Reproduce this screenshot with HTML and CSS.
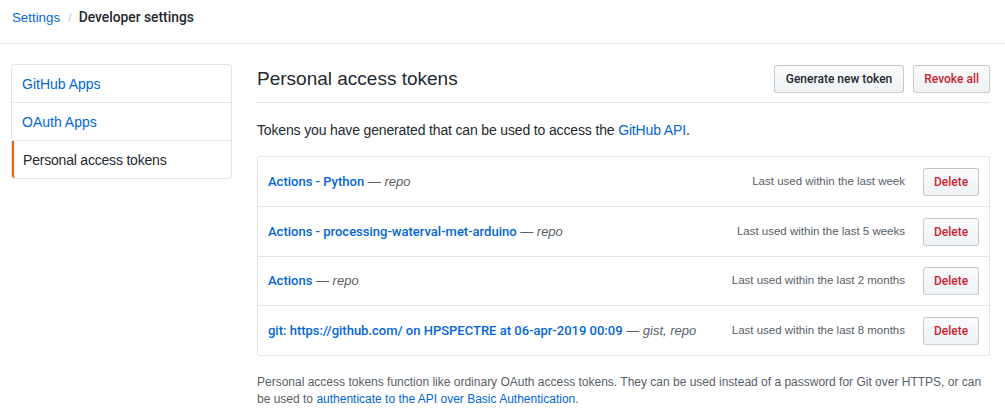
FILE: index.html
```html
<!DOCTYPE html>
<html>
<head>
<meta charset="utf-8">
<link rel="stylesheet" href="styles.css">
</head>
<body>
<div class="pagehead">
  <a class="crumb" href="#">Settings</a><span class="sep">/</span><strong class="current">Developer settings</strong>
</div>
<div class="container">
  <nav class="menu">
    <a class="menu-item" href="#">GitHub Apps</a>
    <a class="menu-item" href="#">OAuth Apps</a>
    <a class="menu-item selected" href="#">Personal access tokens</a>
  </nav>
  <main class="main">
    <div class="subhead">
      <h2 class="subhead-title">Personal access tokens</h2>
      <div class="actions">
        <button class="btn">Generate new token</button>
        <button class="btn danger">Revoke all</button>
      </div>
    </div>
    <p class="intro">Tokens you have generated that can be used to access the <a href="#">GitHub API</a>.</p>
    <div class="box">
      <div class="row">
        <div class="token"><a href="#" class="tname">Actions - Python</a> — <em>repo</em></div>
        <span class="used">Last used within the last week</span>
        <button class="btn danger">Delete</button>
      </div>
      <div class="row">
        <div class="token"><a href="#" class="tname">Actions - processing-waterval-met-arduino</a> — <em>repo</em></div>
        <span class="used">Last used within the last 5 weeks</span>
        <button class="btn danger">Delete</button>
      </div>
      <div class="row">
        <div class="token"><a href="#" class="tname">Actions</a> — <em>repo</em></div>
        <span class="used">Last used within the last 2 months</span>
        <button class="btn danger">Delete</button>
      </div>
      <div class="row">
        <div class="token"><a href="#" class="tname">git: https://github.com/ on HPSPECTRE at 06-apr-2019 00:09</a> — <em>gist, repo</em></div>
        <span class="used">Last used within the last 8 months</span>
        <button class="btn danger">Delete</button>
      </div>
    </div>
    <p class="note">Personal access tokens function like ordinary OAuth access tokens. They can be used instead of a password for Git over HTTPS, or can be used to <a href="#">authenticate to the API over Basic Authentication</a>.</p>
  </main>
</div>
</body>
</html>
```
FILE: styles.css
```css
* { box-sizing: border-box; }
body {
  margin: 0;
  font-family: "Liberation Sans", Arial, sans-serif;
  font-size: 14px;
  line-height: 1.5;
  color: #24292e;
  background: #fff;
}
a { color: #0366d6; text-decoration: none; }
.pagehead {
  height: 44px;
  padding: 7px 12px 0;
  font-size: 13.3px;
  border-bottom: 1px solid #e1e4e8;
}
.sep { color: #c6cbd1; margin: 0 7px 0 8px; }
.current { font-family: Roboto, sans-serif; font-weight: 500; font-size: 13.8px; }
.container {
  display: flex;
  padding: 20px 15px 0 11px;
  gap: 25px;
}
.menu {
  width: 221px;
  flex: none;
  align-self: flex-start;
  border: 1px solid #e1e4e8;
  border-radius: 3px;
  display: flex;
  flex-direction: column;
}
.menu-item {
  display: block;
  padding: 8px 10px;
  height: 38px;
  line-height: 22px;
  border-bottom: 1px solid #e1e4e8;
}
.menu-item:last-child { border-bottom: 0; height: 37px; }
.menu-item.selected {
  color: #24292e;
  border-left: 2px solid #e36209;
  padding-left: 9px;
  letter-spacing: -0.2px;
  border-radius: 0 0 0 3px;
}
.main { flex: 1; }
.subhead {
  display: flex;
  align-items: center;
  justify-content: space-between;
  height: 39px;
  border-bottom: 1px solid #e1e4e8;
  padding-bottom: 8px;
}
.subhead-title { margin: 0; font-size: 19px; font-weight: 400; line-height: 30px; }
.actions { display: flex; gap: 9px; }
.btn {
  font-family: Roboto, sans-serif;
  font-size: 12px;
  font-weight: 500;
  color: #24292e;
  background: linear-gradient(#fafbfc, #eff3f6 90%);
  border: 1px solid rgba(27,31,35,.2);
  border-radius: 3px;
  height: 28px;
  padding: 0 11px;
  line-height: 26px;
}
.btn.danger { color: #cb2431; padding: 0 10px; }
.row .btn { width: 56px; }
.intro { margin: 17px 0 15px; letter-spacing: -0.15px; }
.box {
  border: 1px solid #e1e4e8;
  border-radius: 3px;
}
.row {
  display: flex;
  align-items: center;
  height: 50px;
  padding: 0 10px;
  border-top: 1px solid #e1e4e8;
  white-space: nowrap;
}
.row:first-child { border-top: 0; height: 49px; }
.row:nth-child(3) { height: 49px; }
.token { flex: 1; color: #586069; font-size: 13px; }
.tname { font-family: Roboto, sans-serif; font-weight: 500; font-size: 13px; }
.token em { color: #586069; }
.used { font-size: 11.5px; color: #586069; margin-right: 18px; }
.note { font-size: 12px; color: #586069; margin: 18px 0 0; line-height: 17px; }
```
